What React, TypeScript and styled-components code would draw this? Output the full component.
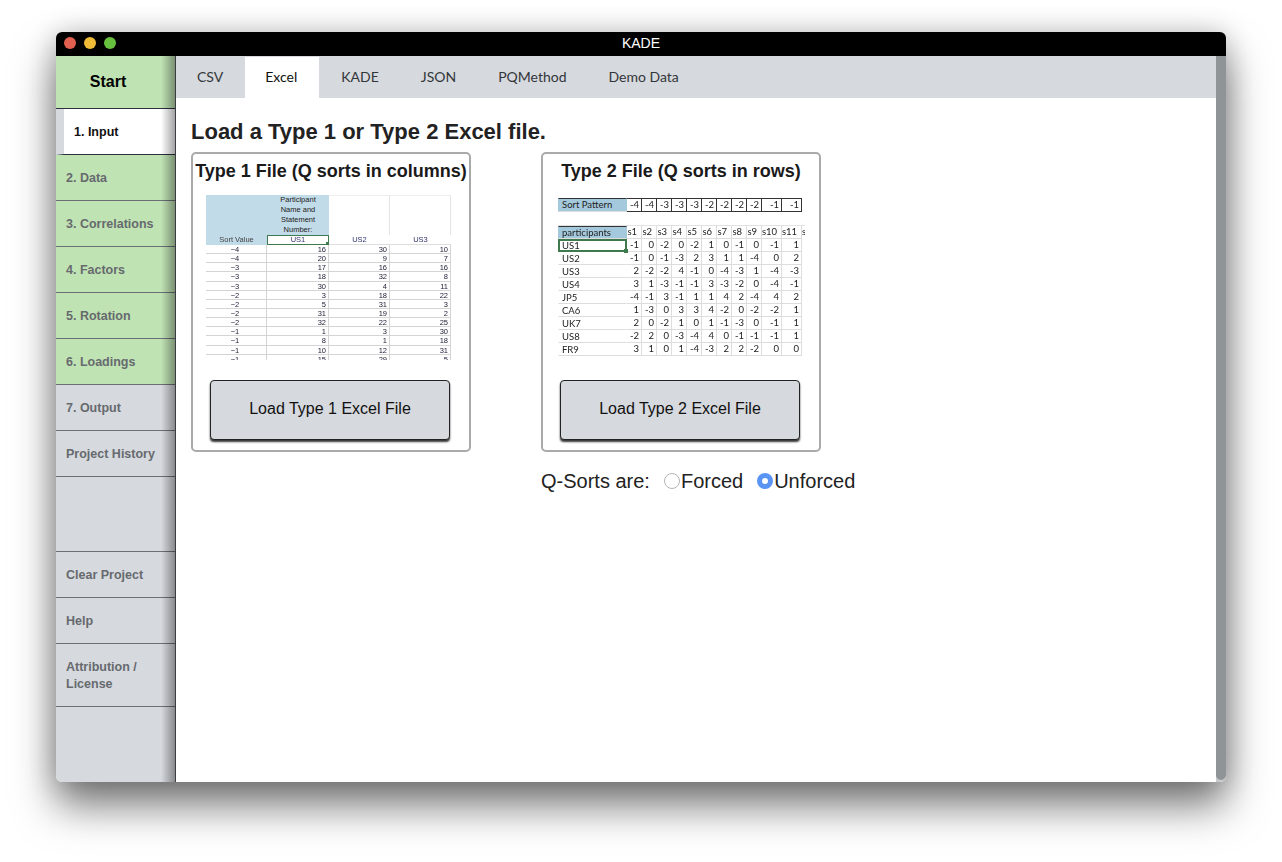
import styled, { createGlobalStyle } from 'styled-components';

const sansStack = '"Liberation Sans", Arial, sans-serif';
const sidebarGreen = '#c0e3b4';
const panelGrey = '#d6d9de';

const GlobalStyle = createGlobalStyle`
  html, body {
    margin: 0;
    padding: 0;
    background: #ffffff;
    font-family: ${sansStack};
  }
`;

type Tone = 'done' | 'active' | 'idle';

const topNav: { label: string; tone: Tone }[] = [
  { label: '1. Input', tone: 'active' },
  { label: '2. Data', tone: 'done' },
  { label: '3. Correlations', tone: 'done' },
  { label: '4. Factors', tone: 'done' },
  { label: '5. Rotation', tone: 'done' },
  { label: '6. Loadings', tone: 'done' },
  { label: '7. Output', tone: 'idle' },
  { label: 'Project History', tone: 'idle' },
];

const tabs = ['CSV', 'Excel', 'KADE', 'JSON', 'PQMethod', 'Demo Data'];

const columnRows = [
  ['−4', '16', '30', '10'],
  ['−4', '20', '9', '7'],
  ['−3', '17', '16', '16'],
  ['−3', '18', '32', '8'],
  ['−3', '30', '4', '11'],
  ['−2', '3', '18', '22'],
  ['−2', '5', '31', '3'],
  ['−2', '31', '19', '2'],
  ['−2', '32', '22', '25'],
  ['−1', '1', '3', '30'],
  ['−1', '8', '1', '18'],
  ['−1', '10', '12', '31'],
  ['−1', '15', '29', '5'],
];

const sortPattern = ['-4', '-4', '-3', '-3', '-3', '-2', '-2', '-2', '-2', '-1', '-1'];
const statements = ['s1', 's2', 's3', 's4', 's5', 's6', 's7', 's8', 's9', 's10', 's11'];

const rowData: [string, string[]][] = [
  ['US1', ['-1', '0', '-2', '0', '-2', '1', '0', '-1', '0', '-1', '1']],
  ['US2', ['-1', '0', '-1', '-3', '2', '3', '1', '1', '-4', '0', '2']],
  ['US3', ['2', '-2', '-2', '4', '-1', '0', '-4', '-3', '1', '-4', '-3']],
  ['US4', ['3', '1', '-3', '-1', '-1', '3', '-3', '-2', '0', '-4', '-1']],
  ['JP5', ['-4', '-1', '3', '-1', '1', '1', '4', '2', '-4', '4', '2']],
  ['CA6', ['1', '-3', '0', '3', '3', '4', '-2', '0', '-2', '-2', '1']],
  ['UK7', ['2', '0', '-2', '1', '0', '1', '-1', '-3', '0', '-1', '1']],
  ['US8', ['-2', '2', '0', '-3', '-4', '4', '0', '-1', '-1', '-1', '1']],
  ['FR9', ['3', '1', '0', '1', '-4', '-3', '2', '2', '-2', '0', '0']],
];

export default function App() {
  return (
    <>
      <GlobalStyle />
      <Desktop>
        <Window>
          <TitleBar>
            <Lights>
              <Light $color="#e2604f" />
              <Light $color="#f0bb36" />
              <Light $color="#68c03f" />
            </Lights>
            KADE
          </TitleBar>
          <Body>
            <Sidebar>
              <StartItem>Start</StartItem>
              {topNav.map((item) => (
                <NavItem key={item.label} $tone={item.tone}>
                  {item.label}
                </NavItem>
              ))}
              <NavSpacer />
              <NavItem $tone="idle">Clear Project</NavItem>
              <NavItem $tone="idle">Help</NavItem>
              <NavItem $tone="idle" $tall>
                Attribution /<br />
                License
              </NavItem>
            </Sidebar>
            <Main>
              <TabBar>
                {tabs.map((tab) => (
                  <Tab key={tab} $active={tab === 'Excel'}>
                    {tab}
                  </Tab>
                ))}
              </TabBar>
              <Content>
                <Heading>Load a Type 1 or Type 2 Excel file.</Heading>
                <Cards>
                  <Card>
                    <CardTitle>Type 1 File (Q sorts in columns)</CardTitle>
                    <ColumnSheet>
                      <ColumnBlue />
                      <ColumnBlue>
                        Participant
                        <br />
                        Name and
                        <br />
                        Statement
                        <br />
                        Number:
                      </ColumnBlue>
                      <ColumnBlank />
                      <ColumnBlank />
                      <ColumnHead $blue>Sort Value</ColumnHead>
                      <ColumnHead $selected>US1</ColumnHead>
                      <ColumnHead>US2</ColumnHead>
                      <ColumnHead>US3</ColumnHead>
                      {columnRows.map((row, r) =>
                        row.map((value, c) => (
                          <ColumnCell key={`${r}-${c}`} $center={c === 0}>
                            {value}
                          </ColumnCell>
                        )),
                      )}
                    </ColumnSheet>
                    <LoadButton>Load Type 1 Excel File</LoadButton>
                  </Card>
                  <SecondColumn>
                    <Card>
                      <CardTitle>Type 2 File (Q sorts in rows)</CardTitle>
                      <RowSheet>
                        <RowLabel $blue $heavy>
                          Sort Pattern
                        </RowLabel>
                        {sortPattern.map((value, i) => (
                          <PatternCell key={i}>{value}</PatternCell>
                        ))}
                        <RowEdge />
                        <RowGap />
                        <RowLabel $blue $heavy>
                          participants
                        </RowLabel>
                        {statements.map((value) => (
                          <RowCell key={value} $head>
                            {value}
                          </RowCell>
                        ))}
                        <RowEdge>s12</RowEdge>
                        {rowData.map(([name, values]) => (
                          <SheetRow key={name}>
                            <RowLabel $selected={name === 'US1'}>{name}</RowLabel>
                            {values.map((value, i) => (
                              <RowCell key={i}>{value}</RowCell>
                            ))}
                            <RowEdge />
                          </SheetRow>
                        ))}
                      </RowSheet>
                      <LoadButton>Load Type 2 Excel File</LoadButton>
                    </Card>
                    <RadioRow>
                      <RadioLabel>Q-Sorts are:</RadioLabel>
                      <RadioOption>
                        <RadioDot />
                        Forced
                      </RadioOption>
                      <RadioOption>
                        <RadioDot $checked />
                        Unforced
                      </RadioOption>
                    </RadioRow>
                  </SecondColumn>
                </Cards>
              </Content>
            </Main>
            <ScrollTrack>
              <ScrollThumb />
            </ScrollTrack>
          </Body>
        </Window>
      </Desktop>
    </>
  );
}

const Desktop = styled.div`
  width: 1282px;
  height: 862px;
  padding: 32px 0 0 56px;
  box-sizing: border-box;
  overflow: hidden;
  background: #ffffff;
`;

const Window = styled.div`
  width: 1170px;
  height: 750px;
  display: flex;
  flex-direction: column;
  border-radius: 6px;
  overflow: hidden;
  box-shadow: 0 24px 42px rgba(0, 0, 0, 0.52), 0 0 28px rgba(0, 0, 0, 0.2);
`;

const TitleBar = styled.div`
  position: relative;
  height: 24px;
  flex: none;
  background: #000000;
  color: #ffffff;
  font-size: 14px;
  line-height: 23px;
  text-align: center;
`;

const Lights = styled.div`
  position: absolute;
  left: 8px;
  top: 5px;
  display: flex;
  gap: 8px;
`;

const Light = styled.span<{ $color: string }>`
  width: 12px;
  height: 12px;
  border-radius: 50%;
  background: ${(p) => p.$color};
`;

const Body = styled.div`
  flex: 1;
  min-height: 0;
  display: flex;
`;

const Sidebar = styled.nav`
  position: relative;
  width: 120px;
  flex: none;
  display: flex;
  flex-direction: column;
  box-sizing: border-box;
  background: ${panelGrey};
  border-right: 1px solid #3a3d42;

  &::after {
    content: '';
    position: absolute;
    top: 0;
    right: 0;
    bottom: 0;
    width: 14px;
    background: linear-gradient(to right, rgba(0, 0, 0, 0), rgba(0, 0, 0, 0.36));
    pointer-events: none;
  }
`;

const StartItem = styled.div`
  height: 53px;
  flex: none;
  box-sizing: border-box;
  padding-right: 15px;
  display: flex;
  align-items: center;
  justify-content: center;
  background: ${sidebarGreen};
  border-bottom: 1px solid #2c3040;
  color: #000000;
  font-size: 16px;
  font-weight: 700;
`;

const NavItem = styled.div<{ $tone: Tone; $tall?: boolean }>`
  height: ${(p) => (p.$tall ? '63px' : '46px')};
  flex: none;
  box-sizing: border-box;
  display: flex;
  align-items: center;
  padding: 2px 0 0 10px;
  background: ${(p) =>
    p.$tone === 'active' ? '#ffffff' : p.$tone === 'done' ? sidebarGreen : panelGrey};
  border-left: ${(p) => (p.$tone === 'active' ? `8px solid ${panelGrey}` : 'none')};
  border-bottom: 1px solid ${(p) => (p.$tone === 'active' ? '#2c3040' : '#6b7076')};
  color: ${(p) => (p.$tone === 'active' ? '#111111' : '#666a6e')};
  font-size: 12.5px;
  font-weight: 700;
  line-height: 17px;
`;

const NavSpacer = styled.div`
  height: 75px;
  flex: none;
  box-sizing: border-box;
  border-bottom: 1px solid #6b7076;
`;

const Main = styled.main`
  flex: 1;
  min-width: 0;
  display: flex;
  flex-direction: column;
  background: #ffffff;
`;

const TabBar = styled.div`
  height: 42px;
  flex: none;
  box-sizing: border-box;
  padding: 1px 0 0 1px;
  display: flex;
  gap: 2px;
  background: ${panelGrey};
`;

const Tab = styled.div<{ $active?: boolean }>`
  padding: 0 ${(p) => (p.$active ? '22px' : '20px')} 2px 20px;
  display: flex;
  align-items: center;
  background: ${(p) => (p.$active ? '#ffffff' : 'transparent')};
  color: ${(p) => (p.$active ? '#111111' : '#333639')};
  font-family: Lato, sans-serif;
  font-size: 14px;
`;

const Content = styled.div`
  flex: 1;
  padding: 22px 0 0 15px;
`;

const Heading = styled.h1`
  margin: 0 0 8px;
  color: #222222;
  font-size: 22px;
  font-weight: 700;
  line-height: 24px;
`;

const Cards = styled.div`
  display: flex;
  gap: 70px;
  align-items: flex-start;
`;

const SecondColumn = styled.div`
  display: flex;
  flex-direction: column;
`;

const Card = styled.section`
  width: 280px;
  height: 300px;
  box-sizing: border-box;
  border: 2px solid #aaaaaa;
  border-radius: 5px;
  display: flex;
  flex-direction: column;
  align-items: center;
`;

const CardTitle = styled.h2`
  margin: 6px 0 12px;
  color: #1a1a1a;
  font-size: 18px;
  font-weight: 700;
  line-height: 23px;
  white-space: nowrap;
`;

const ColumnSheet = styled.div`
  width: 248px;
  height: 165px;
  flex: none;
  margin-right: 2px;
  overflow: hidden;
  display: grid;
  grid-template-columns: 61px 62px 61px 61px;
  grid-template-rows: 40px 10px;
  grid-auto-rows: 9.15px;
  color: #222222;
  font-size: 7.5px;
  filter: blur(0.3px);
`;

const ColumnBlue = styled.div`
  box-sizing: border-box;
  background: #c2dbe8;
  display: flex;
  align-items: flex-end;
  justify-content: center;
  text-align: center;
  line-height: 10px;
  overflow: hidden;
`;

const ColumnBlank = styled.div`
  border-right: 1px solid #e4e4e4;
  border-top: 1px solid #eeeeee;
`;

const ColumnHead = styled.div<{ $blue?: boolean; $selected?: boolean }>`
  position: relative;
  box-sizing: border-box;
  text-align: center;
  line-height: ${(p) => (p.$selected ? '8px' : '10px')};
  background: ${(p) => (p.$blue ? '#c2dbe8' : 'transparent')};
  border: ${(p) => (p.$selected ? '1px solid #3f7a4e' : 'none')};
  border-bottom: ${(p) => (p.$blue ? 'none' : p.$selected ? '1px solid #3f7a4e' : '1px solid #dddddd')};
  color: ${(p) => (p.$blue ? '#444444' : '#33336f')};

  &::after {
    content: '';
    display: ${(p) => (p.$selected ? 'block' : 'none')};
    position: absolute;
    right: -1px;
    bottom: -1px;
    width: 3px;
    height: 3px;
    background: #3f7a4e;
  }
`;

const ColumnCell = styled.div<{ $center?: boolean }>`
  box-sizing: border-box;
  padding-right: 2px;
  line-height: 9px;
  text-align: ${(p) => (p.$center ? 'center' : 'right')};
  border-bottom: 1px solid #d4d4d4;
  border-right: 1px solid #d4d4d4;
  color: #22223a;
`;

const RowSheet = styled.div`
  width: 247px;
  height: 165px;
  flex: none;
  margin-left: 1px;
  overflow: hidden;
  display: grid;
  grid-template-columns: 69px repeat(9, 15px) 20px 20px 3px;
  grid-template-rows: 3px 14px 13.5px 13.5px;
  grid-auto-rows: 13px;
  color: #222222;
  font-family: Lato, sans-serif;
  font-size: 9.5px;
  filter: blur(0.2px);

  &::before {
    content: '';
    grid-column: 1 / -1;
  }
`;

const RowGap = styled.div`
  grid-column: 1 / -1;
  border-bottom: 1px solid #e2e2e2;
`;

const SheetRow = styled.div`
  display: contents;
`;

const RowLabel = styled.div<{ $blue?: boolean; $heavy?: boolean; $selected?: boolean }>`
  position: relative;
  box-sizing: border-box;
  padding-left: ${(p) => (p.$selected ? '2px' : '3px')};
  line-height: ${(p) => (p.$selected ? '10px' : '11px')};
  white-space: nowrap;
  background: ${(p) => (p.$blue ? '#a5c9dc' : 'transparent')};
  border-top: ${(p) => (p.$selected ? '2px' : '1px')} solid
    ${(p) => (p.$heavy ? '#333333' : p.$selected ? '#3f7a4e' : 'transparent')};
  border-left: ${(p) => (p.$selected ? '2px solid #3f7a4e' : '1px solid transparent')};
  border-right: ${(p) => (p.$selected ? '2px solid #3f7a4e' : '1px solid transparent')};
  border-bottom: ${(p) => (p.$selected ? '2px solid #3f7a4e' : '1px solid #dddddd')};

  &::after {
    content: '';
    display: ${(p) => (p.$selected ? 'block' : 'none')};
    position: absolute;
    right: -3px;
    bottom: -3px;
    width: 4px;
    height: 4px;
    background: #3f7a4e;
  }
`;

const PatternCell = styled.div`
  box-sizing: border-box;
  padding-right: 2px;
  line-height: 12px;
  text-align: right;
  border-top: 1px solid #333333;
  border-right: 1px solid #333333;
  border-bottom: 1px solid #333333;
`;

const RowCell = styled.div<{ $head?: boolean }>`
  box-sizing: border-box;
  padding-right: ${(p) => (p.$head ? '4px' : '2px')};
  line-height: 12px;
  text-align: right;
  border-right: 1px solid #dddddd;
  border-bottom: 1px solid #dddddd;
`;

const RowEdge = styled.div`
  overflow: hidden;
  line-height: 12px;
  white-space: nowrap;
`;

const LoadButton = styled.button`
  width: 240px;
  height: 60px;
  flex: none;
  margin: 20px 2px 0 0;
  padding: 0 0 2px;
  background: ${panelGrey};
  border: 1px solid #222222;
  border-radius: 4px;
  box-shadow: 0 2px 2px rgba(0, 0, 0, 0.8);
  color: #111111;
  font-family: ${sansStack};
  font-size: 16px;
`;

const RadioRow = styled.div`
  margin-top: 17px;
  display: flex;
  align-items: center;
  color: #222222;
  font-size: 20px;
  line-height: 24px;
`;

const RadioLabel = styled.span`
  margin-right: 14px;
`;

const RadioOption = styled.span`
  display: flex;
  align-items: center;
  margin-right: 14px;
`;

const RadioDot = styled.span<{ $checked?: boolean }>`
  width: 16px;
  height: 16px;
  margin-right: 1px;
  box-sizing: border-box;
  border-radius: 50%;
  background: #ffffff;
  border: ${(p) => (p.$checked ? '5px solid #5a95f5' : '1px solid #b5b5b5')};
`;

const ScrollTrack = styled.div`
  width: 10px;
  flex: none;
  background: #c7cacd;
  display: flex;
  padding-bottom: 2px;
  box-sizing: border-box;
`;

const ScrollThumb = styled.div`
  flex: 1;
  background: #8f9497;
  border-radius: 0 0 5px 5px;
`;
